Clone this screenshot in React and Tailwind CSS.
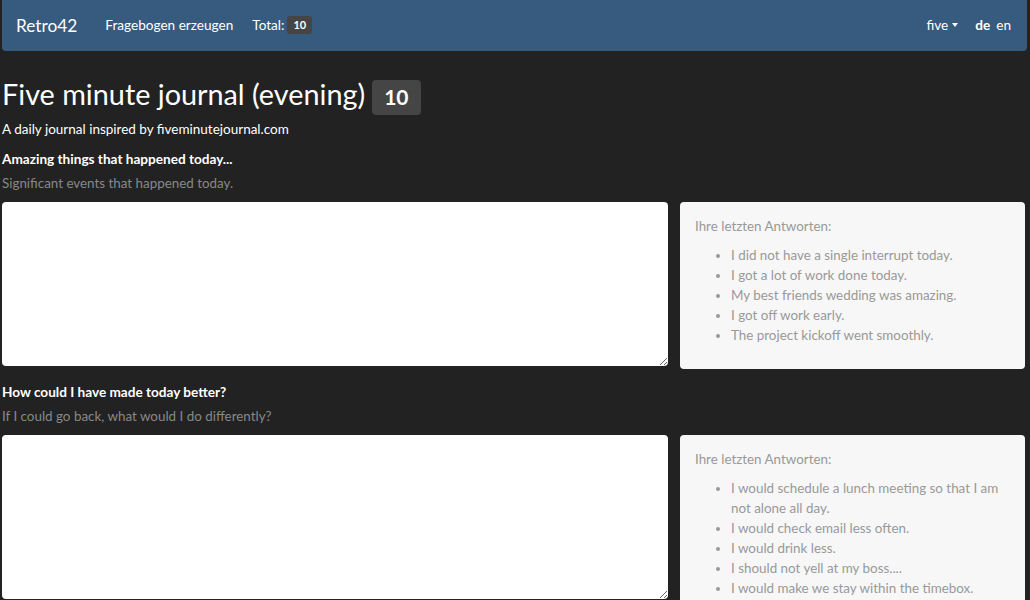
const questions = [
    {
        label: 'Amazing things that happened today...',
        hint: 'Significant events that happened today.',
        answers: [
            'I did not have a single interrupt today.',
            'I got a lot of work done today.',
            'My best friends wedding was amazing.',
            'I got off work early.',
            'The project kickoff went smoothly.',
        ],
    },
    {
        label: 'How could I have made today better?',
        hint: 'If I could go back, what would I do differently?',
        answers: [
            'I would schedule a lunch meeting so that I am not alone all day.',
            'I would check email less often.',
            'I would drink less.',
            'I should not yell at my boss....',
            'I would make we stay within the timebox.',
        ],
    },
];

const Question = ({ q }) => (
    <div>
        <div className="text-[13.6px] leading-[20px] font-bold text-white">{q.label}</div>
        <div className="mt-[4px] text-[13.4px] leading-[20px] text-[#888888]">{q.hint}</div>
        <div className="mt-[9px] flex items-start gap-[12px]">
            <textarea className="w-[666px] h-[164px] bg-white rounded-[4px] outline-none p-2 text-[#222]" />
            <div className="w-[345px] bg-[#f7f7f7] rounded-[4px] pt-[14px] pb-[24px] px-[15px] text-[13.4px] leading-[20px] text-[#999999]">
                <div>Ihre letzten Antworten:</div>
                <ul className="mt-[9px] pl-[36px] list-disc">
                    {q.answers.map((a) => (
                        <li key={a}>{a}</li>
                    ))}
                </ul>
            </div>
        </div>
    </div>
);

export default function App() {
    return (
        <div className="min-h-[600px] bg-[#222222] text-white" style={{ fontFamily: 'Lato, "Open Sans", sans-serif' }}>
            <nav className="ml-[2px] w-[1025px] h-[51px] bg-[#375a7f] rounded-b-[4px] flex items-center text-[13.6px]">
                <span className="ml-[14px] text-[17.3px]">Retro42</span>
                <span className="ml-[28px]">Fragebogen erzeugen</span>
                <span className="ml-[19px] flex items-center">
                    Total:
                    <span className="ml-[3px] bg-[#464545] rounded-[3px] px-[6px] h-[18px] flex items-center text-[11px] font-bold">10</span>
                </span>
                <div className="ml-auto flex items-center mr-[16px]">
                    <span>five</span>
                    <span className="ml-[4px] w-0 h-0 border-l-[3.5px] border-r-[3.5px] border-t-[4px] border-l-transparent border-r-transparent border-t-white" />
                    <span className="ml-[17px] font-bold">de</span>
                    <span className="ml-[6px]">en</span>
                </div>
            </nav>
            <main className="pl-[2px]">
                <div className="mt-[25px] h-[36px] flex items-center">
                    <h1 className="text-[28.8px] leading-[36px]">Five minute journal (evening)</h1>
                    <span className="ml-[7px] mt-[6px] h-[35px] px-[12px] rounded-[4px] bg-[#464545] flex items-center text-[21px] font-bold">10</span>
                </div>
                <p className="mt-[7px] text-[13.5px] leading-[21px]">A daily journal inspired by fiveminutejournal.com</p>
                <div className="mt-[9px] flex flex-col gap-[13px]">
                    {questions.map((q) => (
                        <Question key={q.label} q={q} />
                    ))}
                </div>
            </main>
        </div>
    );
}
